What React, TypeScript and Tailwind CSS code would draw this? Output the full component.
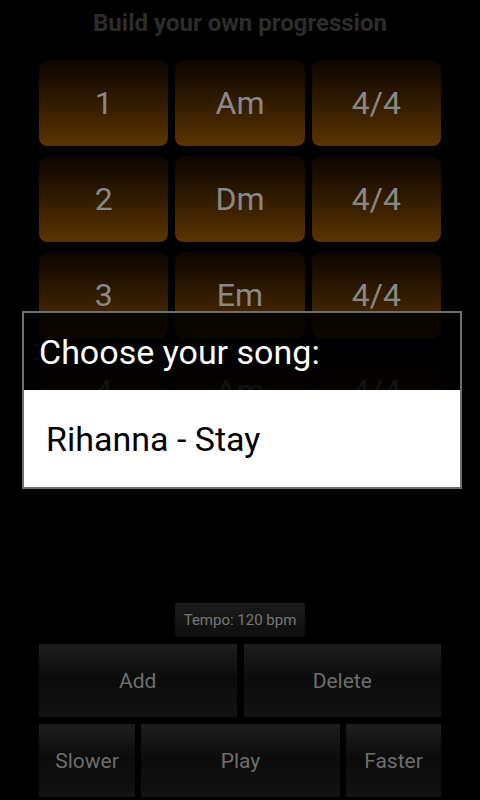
import React from 'react';

const rows = [
  ['1', 'Am', '4/4'],
  ['2', 'Dm', '4/4'],
  ['3', 'Em', '4/4'],
  ['4', 'Am', '4/4'],
];

function Cell({ label }: { label: string }) {
  return (
    <div className="flex h-[86px] items-center justify-center rounded-[8px] bg-gradient-to-b from-[#0c0600] to-[#5c3400] text-[32px] text-[#888888]">
      {label}
    </div>
  );
}

function DarkButton({ label, className }: { label: string; className?: string }) {
  return (
    <div
      className={
        'flex h-[73px] items-center justify-center pt-[3px] bg-gradient-to-b from-[#1e1e1e] via-[#0b0b0b] to-[#131313] text-[21px] text-[#6e6e6e] ' +
        (className ?? '')
      }
    >
      {label}
    </div>
  );
}

export default function App() {
  return (
    <div
      className="relative flex h-[800px] w-[480px] flex-col overflow-hidden bg-black"
      style={{ fontFamily: 'Roboto, "Noto Sans", sans-serif' }}
    >
      <div className="flex h-[60px] items-center justify-center pb-[14px] text-[24px] font-bold text-[#2c2c2c]">
        Build your own progression
      </div>

      <div className="grid grid-cols-3 gap-x-[7px] gap-y-[10px] px-[39px]">
        {rows.map((row) =>
          row.map((label, i) => <Cell key={row[0] + '-' + i} label={label} />)
        )}
      </div>

      <div className="flex-1" />

      <div className="flex flex-col gap-[7px] px-[39px] pb-[3px]">
        <div className="flex justify-center">
          <div className="flex h-[34px] w-[130px] items-center justify-center bg-gradient-to-b from-[#1c1c1c] to-[#0e0e0e] text-[15px] text-[#777777]">
            Tempo: 120 bpm
          </div>
        </div>
        <div className="flex gap-[7px]">
          <DarkButton label="Add" className="flex-1" />
          <DarkButton label="Delete" className="flex-1" />
        </div>
        <div className="flex gap-[6px]">
          <DarkButton label="Slower" className="w-[96px]" />
          <DarkButton label="Play" className="flex-1" />
          <DarkButton label="Faster" className="w-[95px]" />
        </div>
      </div>

      {/* song picker dialog */}
      <div className="absolute left-[22px] top-[311px] flex w-[440px] flex-col border-2 border-[#6f6f6f]">
        <div className="flex h-[77px] items-center bg-black/[0.87] pl-[15px] pt-[2px] text-[34px] text-white">
          Choose your song:
        </div>
        <div className="flex h-[97px] items-center bg-white pl-[22px] pt-[2px] text-[34px] text-black">
          Rihanna - Stay
        </div>
      </div>
    </div>
  );
}
